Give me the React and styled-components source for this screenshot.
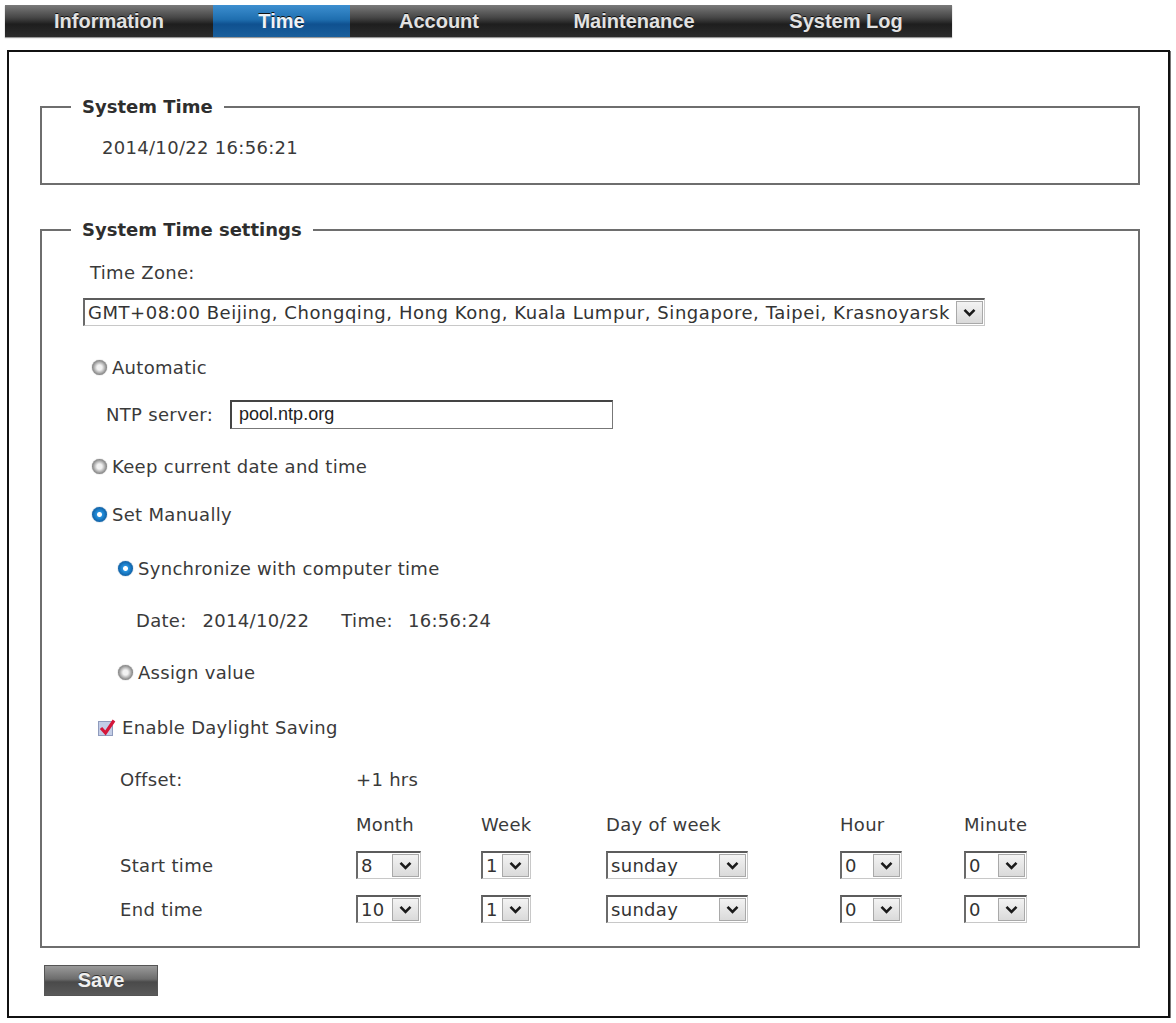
import React from 'react'
import styled, { createGlobalStyle, css } from 'styled-components'

const GlobalStyle = createGlobalStyle`
  body {
    margin: 0;
    background: #fff;
    font-family: 'DejaVu Sans', Verdana, sans-serif;
    color: #3a3a3a;
  }
`

const Page = styled.div`
  padding-top: 5px;
  width: 1176px;
`

const NavBar = styled.nav`
  margin-left: 5px;
  width: 947px;
  height: 32px;
  display: grid;
  grid-template-columns: 208px 137px 178px 212px 212px;
  background: linear-gradient(#7a7a7a 0%, #454545 40%, #1e1e1e 60%, #2c2c2c 100%);
  box-shadow: 0 1px 1px #999;
`

const Tab = styled.div`
  display: flex;
  align-items: center;
  justify-content: center;
  font-family: 'Liberation Sans', Arial, sans-serif;
  font-weight: bold;
  font-size: 20px;
  color: #e2e2e2;
  text-shadow: 0 -1px 0 #111;
  ${p =>
    p.$active &&
    css`
      background: linear-gradient(#3d8fd0 0%, #1f6fb0 45%, #0f5190 60%, #1a5f9c 100%);
      color: #eef3f8;
    `}
`

const Frame = styled.main`
  margin: 13px 0 0 7px;
  width: 1163px;
  box-sizing: border-box;
  border: 2px solid #111;
  box-shadow: 1px 1px 0 #777;
  padding: 44px 28px 20px 31px;
`

const Group = styled.fieldset`
  margin: 0 0 ${p => p.$after || 0}px;
  min-width: 0;
  border: 2px solid #6e6e6e;
  padding: 0 0 ${p => p.$bottom || 0}px 41px;
`

const Legend = styled.legend`
  margin-left: -12px;
  padding: 0 11px;
  font-weight: bold;
  font-size: 18px;
  line-height: 22px;
  color: #2e2e2e;
`

const Row = styled.div`
  height: 28px;
  display: flex;
  align-items: center;
  margin-top: ${p => p.$gap || 0}px;
  padding-left: ${p => p.$indent || 0}px;
  font-size: 18px;
  letter-spacing: 0.3px;
  white-space: nowrap;
`

const DstRow = styled(Row)`
  display: grid;
  grid-template-columns: 236px 125px 125px 234px 124px auto;
  align-items: center;
`

const Label = styled.span`
  margin-right: ${p => p.$space || 0}px;
`

const SelectBox = styled.div`
  width: ${p => p.$w}px;
  height: ${p => p.$h || 28}px;
  box-sizing: border-box;
  display: flex;
  align-items: center;
  justify-content: space-between;
  border-style: solid;
  border-width: 2px 1px 1px 2px;
  border-color: #5c5c5c #c8c8c8 #c8c8c8 #6a6a6a;
  padding: 0 1px 0 3px;
  background: #fff;
  color: #333;
  font-size: 18px;
  letter-spacing: ${p => (p.$wide ? 0.55 : 0.3)}px;
`

const SelectText = styled.span`
  overflow: hidden;
  min-width: 0;
`

const ArrowBox = styled.span`
  flex: none;
  width: 27px;
  height: 23px;
  box-sizing: border-box;
  display: flex;
  align-items: center;
  justify-content: center;
  background: linear-gradient(#f3f3f3, #dadada);
  border: 1px solid #a9a9a9;
`

const TextInput = styled.div`
  width: 383px;
  height: 29px;
  box-sizing: border-box;
  display: flex;
  align-items: center;
  border-style: solid;
  border-width: 2px 1px 1px 2px;
  border-color: #444 #777 #777 #444;
  padding-left: 7px;
  font-family: 'Liberation Sans', Arial, sans-serif;
  font-size: 18px;
  letter-spacing: 0;
  color: #222;
`

const RadioDot = styled.span`
  width: 15px;
  height: 15px;
  border-radius: 50%;
  margin-right: 5px;
  box-sizing: border-box;
  flex: none;
  ${p =>
    p.$on
      ? css`
          background: radial-gradient(circle, #ffffff 0 2px, #2590dc 3px, #0d5fa5 7.5px);
          box-shadow: 0 0 1px #0b4f8a;
        `
      : css`
          background: radial-gradient(circle, #f2f2f2 0 2.5px, #c4c4c4 4.5px, #7e7e7e 7.5px);
          box-shadow: 0 0 1px #666;
        `}
`

const CheckMark = styled.svg`
  margin-right: 6px;
  flex: none;
`

const SaveButton = styled.button`
  margin: 17px 0 0 4px;
  width: 114px;
  height: 31px;
  border: 1px solid #555;
  background: linear-gradient(#9a9a9a 0%, #6d6d6d 45%, #4a4a4a 55%, #5a5a5a 100%);
  color: #f0f0f0;
  font-family: 'Liberation Sans', Arial, sans-serif;
  font-weight: bold;
  font-size: 20px;
  text-shadow: 0 -1px 0 #333;
  padding: 0;
`

const SysValue = styled.div`
  margin-top: 17px;
  padding-left: 19px;
  height: 24px;
  font-size: 18px;
  letter-spacing: 0.3px;
  display: flex;
  align-items: center;
`

const Chevron = () => (
  <svg width="13" height="9" viewBox="0 0 13 9">
    <path d="M1.5 1.8 L6.5 6.8 L11.5 1.8" fill="none" stroke="#1a1a1a" strokeWidth="2.6" />
  </svg>
)

const Select = ({ w, h, value, wide }) => (
  <SelectBox $w={w} $h={h} $wide={wide}>
    <SelectText>{value}</SelectText>
    <ArrowBox>
      <Chevron />
    </ArrowBox>
  </SelectBox>
)

const Radio = ({ on, children }) => (
  <>
    <RadioDot $on={on} />
    <span>{children}</span>
  </>
)

const tabs = ['Information', 'Time', 'Account', 'Maintenance', 'System Log']

export default function App() {
  return (
    <Page>
      <GlobalStyle />
      <NavBar>
        {tabs.map(t => (
          <Tab key={t} $active={t === 'Time'}>
            {t}
          </Tab>
        ))}
      </NavBar>
      <Frame>
        <Group $after={34} $bottom={24}>
          <Legend>System Time</Legend>
          <SysValue>2014/10/22 16:56:21</SysValue>
        </Group>

        <Group $bottom={23}>
          <Legend>System Time settings</Legend>
          <Row $gap={17} $indent={7}>Time Zone:</Row>
          <Row $gap={12}>
            <Select
              wide
              w={902}
              h={28}
              value="GMT+08:00 Beijing, Chongqing, Hong Kong, Kuala Lumpur, Singapore, Taipei, Krasnoyarsk"
            />
          </Row>
          <Row $gap={27} $indent={9}>
            <Radio>Automatic</Radio>
          </Row>
          <Row $gap={19} $indent={23}>
            <Label $space={17}>NTP server:</Label>
            <TextInput>pool.ntp.org</TextInput>
          </Row>
          <Row $gap={24} $indent={9}>
            <Radio>Keep current date and time</Radio>
          </Row>
          <Row $gap={20} $indent={9}>
            <Radio on>Set Manually</Radio>
          </Row>
          <Row $gap={26} $indent={35}>
            <Radio on>Synchronize with computer time</Radio>
          </Row>
          <Row $gap={24} $indent={53}>
            <Label $space={16}>Date:</Label>
            <Label $space={32}>2014/10/22</Label>
            <Label $space={15}>Time:</Label>
            <Label>16:56:24</Label>
          </Row>
          <Row $gap={24} $indent={35}>
            <Radio>Assign value</Radio>
          </Row>
          <Row $gap={27} $indent={15}>
            <CheckMark width="18" height="18" viewBox="0 0 18 18">
              <rect x="0.5" y="3.5" width="14" height="14" fill="#c3cde6" stroke="#8f9bbd" />
              <path d="M3 10 L7.5 15 L16 2.5" fill="none" stroke="#d4163a" strokeWidth="3.2" />
            </CheckMark>
            <span>Enable Daylight Saving</span>
          </Row>
          <DstRow $gap={24} $indent={37}>
            <span>Offset:</span>
            <span>+1 hrs</span>
          </DstRow>
          <DstRow $gap={17} $indent={37}>
            <span />
            <span>Month</span>
            <span>Week</span>
            <span>Day of week</span>
            <span>Hour</span>
            <span>Minute</span>
          </DstRow>
          <DstRow $gap={13} $indent={37}>
            <span>Start time</span>
            <Select w={65} value="8" />
            <Select w={50} value="1" />
            <Select w={142} value="sunday" />
            <Select w={62} value="0" />
            <Select w={63} value="0" />
          </DstRow>
          <DstRow $gap={16} $indent={37}>
            <span>End time</span>
            <Select w={65} value="10" />
            <Select w={50} value="1" />
            <Select w={142} value="sunday" />
            <Select w={62} value="0" />
            <Select w={63} value="0" />
          </DstRow>
        </Group>

        <SaveButton>Save</SaveButton>
      </Frame>
    </Page>
  )
}
